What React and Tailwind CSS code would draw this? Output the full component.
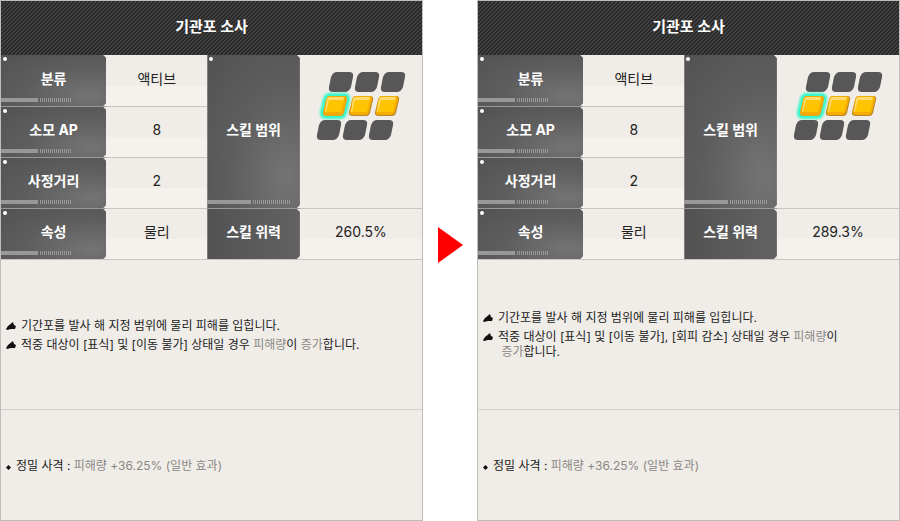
import clsx from 'clsx';

const skills = [
    {
        id: 'before',
        power: '260.5%',
        effect: (
            <>
                적중 대상이 [표식] 및 [이동 불가] 상태일 경우 <Muted>피해량</Muted>이 <Muted>증가</Muted>합니다.
            </>
        ),
    },
    {
        id: 'after',
        power: '289.3%',
        effect: (
            <>
                적중 대상이 [표식] 및 [이동 불가], [회피 감소] 상태일 경우 <Muted>피해량</Muted>이
                <br />
                <Muted>&nbsp;증가</Muted>합니다.
            </>
        ),
    },
];

const rangeRows = [
    { y: 7, x: 18, active: false },
    { y: 31, x: 12, active: true },
    { y: 55, x: 6, active: false },
];

function Muted({ children }) {
    return <span className="text-[#8a8784]">{children}</span>;
}

function Label({ children, className, wide, plain, ...props }) {
    return (
        <th scope="row" className={clsx('relative p-0 pb-1 text-sm font-bold text-white', className)} {...props}>
            {/* Plate with cut corners on the right */}
            <span
                className={clsx(
                    'absolute inset-0 [clip-path:polygon(0_0,calc(100%-3px)_0,100%_3px,100%_calc(100%-3px),calc(100%-3px)_100%,0_100%)]',
                    plain
                        ? 'bg-[linear-gradient(90deg,#525252,#626262)]'
                        : 'bg-[radial-gradient(ellipse_at_85%_80%,#747474,#5e5e5e_50%,#525252)]'
                )}
            />
            {!plain && (
                <>
                    <span className="absolute left-[2px] top-[2px] size-[4px] rounded-full bg-white" />
                    <span className={clsx('absolute bottom-[4px] left-0 h-[4px] bg-[#989898]', wide ? 'w-[47%]' : 'w-[35%]')} />
                    <span
                        className={clsx(
                            'absolute bottom-[4px] h-[4px] bg-[repeating-linear-gradient(90deg,#999_0_1px,transparent_1px_2px)]',
                            wide ? 'left-[49%] w-[40%]' : 'left-[37%] w-[30%]'
                        )}
                    />
                </>
            )}
            <span className="relative">{children}</span>
        </th>
    );
}

function Value({ children }) {
    return (
        <td className="border-[#c8c6c3] bg-[linear-gradient(#f0ede8_60%,#f5f2ee_60%)] p-0 pb-1 text-center text-sm in-[.ruled]:border-t">
            {children}
        </td>
    );
}

function RangeGrid() {
    return (
        <svg viewBox="0 0 100 80" className="mx-auto h-20 w-[100px]" role="img" aria-label="스킬 범위">
            <defs>
                <filter id="glow" x="-30%" y="-30%" width="160%" height="160%">
                    <feGaussianBlur stdDeviation="1" />
                </filter>
            </defs>
            {rangeRows.map(row =>
                [0, 1, 2].map(col => (
                    <g key={col} transform={`translate(${row.x + col * 26} ${row.y})`}>
                        {row.active && col === 0 && (
                            <path d="M7 0H21Q25 0 24 4L21 17Q20 20 17 20H3Q-1 20 0 16L3 3Q4 0 7 0Z" fill="#35f7cb" stroke="#35f7cb" strokeWidth="6" filter="url(#glow)" />
                        )}
                        {row.active ? (
                            <>
                                <path d="M7 0H21Q25 0 24 4L21 17Q20 20 17 20H4Q-1 20 0 16L3 4Q4 0 7 0Z" fill={col === 0 ? '#e9a51c' : '#b8872c'} />
                                <path d="M7 0H20Q24 0 23 4L20 16Q19 19 16 19H4Q0 19 1 15L3 4Q4 0 7 0Z" fill="#f5ac00" />
                                <path d="M7 1H20Q22 1 21 4L18 16H2L4 4Q5 1 7 1Z" fill="#ffc400" />
                                <path d="M7 1H21L20 4H6L3 16H2L4 3Q5 1 7 1Z" fill="#ffdb70" />
                            </>
                        ) : (
                            <path d="M8 0H20Q25 0 24 5L22 15Q20 20 16 20H4Q-1 20 0 15L2 5Q4 0 8 0Z" fill="#575757" />
                        )}
                    </g>
                ))
            )}
        </svg>
    );
}

function Bullet() {
    return (
        <svg viewBox="0 0 10 8" className="mt-1 h-2 w-[10px] shrink-0" aria-hidden="true">
            <path d="M0 7L2 4L7 0L8 3L10 4L9 7L5 7L1 8Z" fill="#111" />
        </svg>
    );
}

function SkillPanel({ skill }) {
    return (
        <table className="w-full min-w-0 table-fixed border-separate border-spacing-0 border border-[#bdbdb9] bg-[#f0ede8] text-[#222]">
            <colgroup>
                <col className="w-[25%]" />
                <col className="w-[24%]" />
                <col className="w-[22%]" />
                <col className="w-[29%]" />
            </colgroup>
            <thead>
                <tr className="h-[54px]">
                    <th colSpan={4} className="bg-[linear-gradient(135deg,#282828_35%,#414141_35%_50%,#282828_50%_85%,#414141_85%)] bg-size-[4px_4px] p-0 pb-[2px] text-[15px] font-bold text-white">
                        기관포 소사
                    </th>
                </tr>
            </thead>
            <tbody>
                <tr className="h-[51px]">
                    <Label>분류</Label>
                    <Value>액티브</Value>
                    <Label rowSpan={3} wide>스킬 범위</Label>
                    <td rowSpan={3} className="p-0 pt-[10px] align-top">
                        <RangeGrid />
                    </td>
                </tr>
                <tr className="ruled h-[51px]">
                    <Label className="border-t border-[#999]">소모 AP</Label>
                    <Value>8</Value>
                </tr>
                <tr className="ruled h-[51px]">
                    <Label className="border-t border-[#999]">사정거리</Label>
                    <Value>2</Value>
                </tr>
                <tr className="ruled h-[51px]">
                    <Label className="border-t border-[#999]">속성</Label>
                    <Value>물리</Value>
                    <Label className="border-t border-[#999]" plain>스킬 위력</Label>
                    <Value>{skill.power}</Value>
                </tr>
                <tr className="h-[150px]">
                    <td colSpan={4} className="border-t border-[#c8c6c3] p-0 pl-[5px] text-xs leading-[15px]">
                        <ul className="space-y-1">
                            <li className="flex gap-[5px]">
                                <Bullet />
                                <span>기간포를 발사 해 지정 범위에 물리 피해를 입힙니다.</span>
                            </li>
                            <li className="flex gap-[5px]">
                                <Bullet />
                                <span>{skill.effect}</span>
                            </li>
                        </ul>
                    </td>
                </tr>
                <tr className="h-[111px]">
                    <td colSpan={4} className="border-t border-[#d2d0cd] p-0 pl-[5px] text-xs leading-[15px]">
                        <div className="flex items-center gap-[5px]">
                            <svg viewBox="0 0 5 5" className="mt-1 size-[5px] shrink-0" aria-hidden="true">
                                <path d="M2.5 0L5 2.5L2.5 5L0 2.5Z" fill="#111" />
                            </svg>
                            <span>정밀 사격 : <Muted>피해량 +36.25% (일반 효과)</Muted></span>
                        </div>
                    </td>
                </tr>
            </tbody>
        </table>
    );
}

export default function App() {
    const [before, after] = skills;

    return (
        <main lang="ko" className="grid grid-cols-[1fr_54px_1fr] bg-white font-['Inter','Noto_Sans_CJK_KR',sans-serif]">
            <SkillPanel skill={before} />
            <div className="flex items-center justify-center pb-8">
                <svg viewBox="0 0 25 36" className="h-9 w-[25px]" aria-hidden="true">
                    <path d="M0 0L25 18L0 36Z" fill="#f00" />
                </svg>
            </div>
            <SkillPanel skill={after} />
        </main>
    );
}
